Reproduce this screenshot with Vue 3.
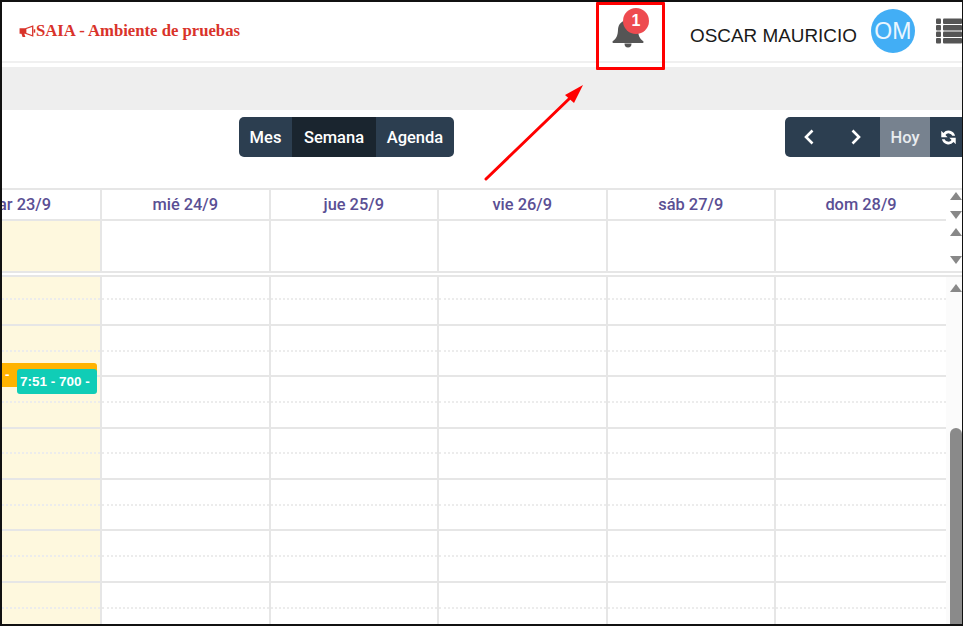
<script setup>
const days = [
  { label: 'mar 23/9', today: true },
  { label: 'mié 24/9' },
  { label: 'jue 25/9' },
  { label: 'vie 26/9' },
  { label: 'sáb 27/9' },
  { label: 'dom 28/9' }
]
const slots = Array.from({ length: 14 }, (_, i) => i)
</script>

<template>
  <div class="frame">
    <header class="topbar">
      <div class="brand">
        <svg class="horn" viewBox="0 0 18 14" width="17" height="14">
          <path d="M0.6 4.2H6.5L15.2 0.8V13.2L6.5 9.8H5.6L6.8 13.4H3.8L2.6 9.8H0.6Z" fill="#d9332a" />
          <path d="M7.8 4.9L13.8 2.8V11.2L7.8 9.1Z" fill="#fff" />
          <path d="M15.6 5.2H17.2V8.8H15.6Z" fill="#d9332a" />
        </svg>
        <span>SAIA - Ambiente de pruebas</span>
      </div>
      <div class="right">
        <div class="bell">
          <svg viewBox="0 0 32 32" width="32" height="32">
            <path d="M16 0c2 0 3 1 3 2.600 4.800 1.300 6.800 5 7 9.400.3 5.500 1.500 8.500 5.500 11.500v.8c0 .5-.3.7-.8.7H1.300c-.5 0-.8-.2-.8-.7v-.8c4-3 5.200-6 5.500-11.500.2-4.400 2.200-8.100 7-9.400C13 1 14 0 16 0z" fill="#555" />
            <path d="M12.500 25.500h7a3.500 4 0 0 1-7 0z" fill="#555" />
          </svg>
          <span class="badge">1</span>
        </div>
        <span class="user">OSCAR MAURICIO</span>
        <span class="avatar">OM</span>
        <svg class="menu" viewBox="0 0 26 26" width="26" height="26">
          <g fill="#555">
            <rect x="0" y="0.500" width="5" height="5.500" rx="1" />
            <rect x="7" y="0.500" width="19" height="5.500" rx="1" />
            <rect x="0" y="7" width="5" height="5.500" rx="1" />
            <rect x="7" y="7" width="19" height="5.500" rx="1" />
            <rect x="0" y="13.500" width="5" height="5.500" rx="1" />
            <rect x="7" y="13.500" width="19" height="5.500" rx="1" />
            <rect x="0" y="20" width="5" height="5.500" rx="1" />
            <rect x="7" y="20" width="19" height="5.500" rx="1" />
          </g>
        </svg>
      </div>
    </header>

    <div class="band"></div>

    <div class="toolbar">
      <div class="group views">
        <button class="mes">Mes</button>
        <button class="semana active">Semana</button>
        <button class="agenda">Agenda</button>
      </div>
      <div class="group nav">
        <button class="arrow">
          <svg viewBox="0 0 12 18" width="12" height="18"><path d="M9.500 2.500L3 9l6.500 6.500" fill="none" stroke="#fff" stroke-width="2.600" /></svg>
        </button>
        <button class="arrow">
          <svg viewBox="0 0 12 18" width="12" height="18"><path d="M2.500 2.500L9 9l-6.500 6.500" fill="none" stroke="#fff" stroke-width="2.600" /></svg>
        </button>
        <button class="hoy">Hoy</button>
        <button class="refresh">
          <svg viewBox="0 0 16 16" width="17" height="17">
            <path d="M14.200 6.400A6.400 6.400 0 0 0 3.200 3.700L1.200 1.700V7.700H7.200L5.100 5.600a3.800 3.800 0 0 1 6.500 .8z" fill="#fff" />
            <path d="M1.800 9.600A6.400 6.400 0 0 0 12.800 12.300L14.800 14.300V8.300H8.800L10.900 10.400a3.800 3.800 0 0 1-6.500-.8z" fill="#fff" />
          </svg>
        </button>
      </div>
    </div>

    <section class="calendar">
      <div class="head-row">
        <div v-for="d in days" :key="d.label" class="head-cell" :class="{ first: d.today }">
          <span>{{ d.label }}</span>
        </div>
        <div class="gutter">
          <i class="up"></i>
          <i class="down"></i>
        </div>
      </div>
      <div class="allday-row">
        <div v-for="d in days" :key="d.label" class="allday-cell" :class="{ today: d.today, first: d.today }"></div>
        <div class="gutter spread">
          <i class="up"></i>
          <i class="down"></i>
        </div>
      </div>
      <div class="time-row">
        <div v-for="d in days" :key="d.label" class="col" :class="{ today: d.today, first: d.today }">
          <div v-for="s in slots" :key="s" class="slot" :class="s % 2 === 0 ? 'dotted' : 'solid'"></div>
          <template v-if="d.today">
            <div class="event orange">-</div>
            <div class="event teal">7:51 - 700 -</div>
          </template>
        </div>
        <div class="track">
          <i class="up"></i>
          <div class="thumb"></div>
        </div>
      </div>
    </section>

    <div class="callout"></div>
    <svg class="pointer" viewBox="0 0 110 110" width="110" height="110">
      <path d="M6 103L90 22" stroke="#f00" stroke-width="3" stroke-linecap="round" fill="none" />
      <path d="M103 9L85 19L94 27Z" fill="#f00" />
    </svg>
  </div>
</template>

<style scoped>
.frame {
  position: relative;
  box-sizing: border-box;
  width: 963px;
  height: 626px;
  border: 2px solid #111;
  border-right-width: 1px;
  overflow: hidden;
  background: #fff;
  font-family: Roboto, "Liberation Sans", sans-serif;
}
.topbar {
  display: flex;
  align-items: center;
  justify-content: space-between;
  box-sizing: border-box;
  height: 61px;
  border-bottom: 2px solid #f0f0f0;
  padding-left: 17px;
}
.brand {
  display: flex;
  align-items: center;
  margin-top: -2px;
  color: #d9332a;
  font: bold 16.700px "Liberation Serif", serif;
}
.horn {
  flex: none;
}
.right {
  display: flex;
  align-items: center;
  width: 352px;
  flex: none;
  height: 100%;
}
.bell {
  position: relative;
  flex: none;
  width: 32px;
  height: 32px;
  margin-left: 2px;
  margin-top: 4px;
}
.badge {
  position: absolute;
  left: 11px;
  top: -10px;
  width: 26px;
  height: 26px;
  border-radius: 50%;
  background: #ee4b50;
  color: #fff;
  text-align: center;
  font: bold 16px/26px "Liberation Sans", sans-serif;
}
.user {
  flex: none;
  margin-left: 46px;
  font: 18.900px "Liberation Sans", sans-serif;
  color: #1a1a1a;
  white-space: nowrap;
  margin-top: 8px;
}
.avatar {
  flex: none;
  width: 44px;
  height: 44px;
  margin-left: 14px;
  border-radius: 50%;
  background: #42aef5;
  color: #eaf6ff;
  text-align: center;
  font: 23px/44px "Liberation Sans", sans-serif;
  margin-top: -2px;
}
.menu {
  flex: none;
  margin-left: 21px;
  margin-top: -2px;
}
.band {
  height: 43px;
  margin-top: 4px;
  background: #eee;
}
.toolbar {
  display: flex;
  align-items: flex-start;
  height: 78px;
  padding-left: 237px;
  padding-top: 7px;
  box-sizing: border-box;
}
.group {
  display: flex;
  height: 40px;
  flex: none;
  border-radius: 5px;
  overflow: hidden;
  background: #2c3e50;
}
.group button {
  display: flex;
  align-items: center;
  justify-content: center;
  height: 100%;
  padding: 0;
  border: 0;
  background: transparent;
  color: #fff;
  font: 500 16.500px Roboto, "Liberation Sans", sans-serif;
}
.mes { width: 53px; }
.semana { width: 84px; }
.agenda { width: 78px; }
.group .active { background: #1a252f; }
.nav {
  margin-left: 331px;
  width: 190px;
  border-radius: 5px 0 0 5px;
}
.arrow { width: 47.500px; }
.group .hoy {
  width: 50px;
  background: #77828f;
  color: #e9ecef;
}
.refresh { width: 40px; }
.group .refresh { justify-content: flex-start; padding-left: 10px; }
.calendar {
  border-top: 2px solid #e6e6e6;
}
.head-row, .allday-row, .time-row {
  display: flex;
}
.head-cell, .allday-cell, .col {
  flex: none;
  box-sizing: border-box;
  width: 168.500px;
  border-right: 2px solid #e6e6e6;
}
.first { width: 100px; }
.head-cell:nth-child(6), .allday-cell:nth-child(6), .col:nth-child(6) {
  width: 170px;
  border-right: 0;
}
.head-cell {
  display: flex;
  justify-content: center;
  align-items: center;
  height: 29px;
  color: #5a4f94;
  font-size: 16.400px;
  font-weight: 500;
  white-space: nowrap;
  overflow: hidden;
}
.head-row > .head-cell.first {
  justify-content: flex-end;
  padding-right: 49px;
}
.allday-row {
  height: 54px;
  box-sizing: border-box;
  border-bottom: 2px solid #e6e6e6;
}
.allday-cell {
  border-top: 2px solid #e6e6e6;
}
.today { background: #fef8de; }
.gutter {
  flex: 1;
  display: flex;
  flex-direction: column;
  align-items: center;
  padding-left: 4px;
  padding-top: 2px;
  gap: 11px;
  box-sizing: border-box;
  background: #fff;
}
.gutter.spread {
  justify-content: space-between;
  padding: 9px 0 7px 4px;
}
.up, .down {
  display: block;
  flex: none;
  width: 0;
  height: 0;
  border-left: 6px solid transparent;
  border-right: 6px solid transparent;
}
.up { border-bottom: 8px solid #888; }
.down { border-top: 8px solid #888; }
.time-row {
  position: relative;
  margin-top: 1.600px;
  height: 350px;
}
.time-row::before {
  content: "";
  position: absolute;
  left: 0;
  right: 0;
  top: 0;
  height: 2px;
  background: #e6e6e6;
  z-index: 1;
}
.col {
  position: relative;
}
.slot {
  box-sizing: border-box;
  height: 25.700px;
}
.dotted { border-bottom: 2px dotted #ececec; }
.solid { border-bottom: 2px solid #e6e6e6; }
.event {
  position: absolute;
  box-sizing: border-box;
  border-radius: 3px;
  color: #fff;
  font: bold 13.500px "Liberation Sans", sans-serif;
}
.orange {
  left: -6px;
  right: 3px;
  top: 88px;
  height: 24px;
  line-height: 24px;
  padding-left: 9px;
  background: #ffb300;
}
.teal {
  left: 15px;
  right: 3px;
  top: 94px;
  height: 25px;
  line-height: 25px;
  padding-left: 3px;
  background: #10cdb6;
  white-space: nowrap;
  overflow: hidden;
}
.track {
  flex: 1;
  position: relative;
  display: flex;
  flex-direction: column;
  align-items: center;
  padding-left: 4px;
  padding-top: 9.400px;
  box-sizing: border-box;
  background: #fbfbfb;
}
.thumb {
  position: absolute;
  right: 0;
  top: 153px;
  bottom: 0;
  width: 12px;
  border-radius: 6px 6px 0 0;
  background: #8a8a8a;
}
.callout {
  position: absolute;
  left: 594px;
  top: 0;
  width: 69px;
  height: 68px;
  box-sizing: border-box;
  border: 3px solid #f00;
  border-radius: 1px;
}
.pointer {
  position: absolute;
  left: 478px;
  top: 74px;
}
</style>
<style>
html, body { margin: 0; background: #fff; }
</style>
